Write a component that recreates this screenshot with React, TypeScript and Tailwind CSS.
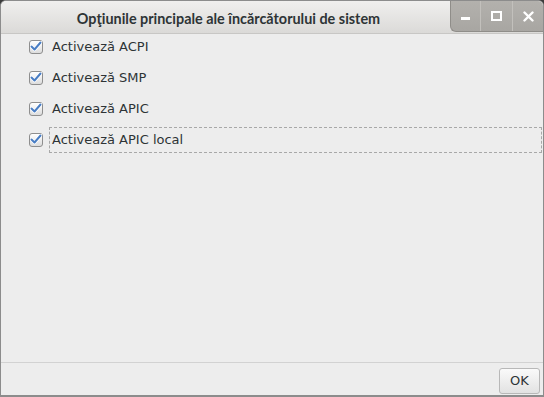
import React from 'react';

const options = ['Activează ACPI', 'Activează SMP', 'Activează APIC', 'Activează APIC local'];

const CheckBox = () => (
  <span className="w-[14px] h-[14px] rounded-[3px] border border-[#8e8e8e] bg-gradient-to-b from-[#ffffff] to-[#dcdcdc] flex items-center justify-center shrink-0">
    <svg width="12" height="11" viewBox="0 0 12 11">
      <path d="M1.5 5.5 L4.5 8.5 L10.5 1.5" fill="none" stroke="#ffffff" strokeWidth="3.6" strokeLinecap="round" strokeLinejoin="round" />
      <path d="M1.5 5.5 L4.5 8.5 L10.5 1.5" fill="none" stroke="#4a7ec4" strokeWidth="2" strokeLinecap="round" strokeLinejoin="round" />
    </svg>
  </span>
);

export default function App() {
  return (
    <div className="w-[544px] h-[397px] bg-[#3c3c3c] font-['DejaVu_Sans',sans-serif]">
      <div className="w-full h-full flex flex-col bg-[#ededed] rounded-t-[6px] border border-[#8c8c8c] border-b-2 overflow-hidden">
        {/* Title bar */}
        <div className="h-[33px] shrink-0 flex bg-gradient-to-b from-[#f0efee] to-[#dbdad8] border-b border-[#c8c7c5]">
          <div className="flex-1 flex items-center justify-center pt-[3px] pl-[6px] font-['Lato',sans-serif] text-[14.4px] font-bold text-[#2e3436]">
            Opţiunile principale ale încărcătorului de sistem
          </div>
          <div className="flex h-[31px] w-[93px] bg-gradient-to-b from-[#b3b1ad] to-[#a8a6a2] rounded-bl-[6px] border-l border-b border-[#8f8d89]">
            <div className="w-[30px] flex items-end justify-center pb-[11px] border-r border-[#c2c0bc]">
              <span className="w-[9px] h-[3px] bg-white" />
            </div>
            <div className="w-[32px] flex items-center justify-center border-r border-[#c2c0bc]">
              <span className="w-[11px] h-[10px] border-[2.5px] border-white" />
            </div>
            <div className="flex-1 flex items-center justify-center">
              <svg width="11" height="11" viewBox="0 0 11 11">
                <path d="M1.5 1.5 L9.5 9.5 M9.5 1.5 L1.5 9.5" stroke="#ffffff" strokeWidth="2.4" strokeLinecap="round" />
              </svg>
            </div>
          </div>
        </div>

        {/* Options */}
        <div className="flex-1 flex flex-col -mt-[3px] pl-[28px] pr-[1px]">
          {options.map((label, i) => (
            <div key={label} className="h-[31px] flex items-center gap-[6px]">
              <CheckBox />
              <span
                className={`h-[26px] flex items-center pl-[2px] text-[13px] text-[#2e3436] ${
                  i === options.length - 1 ? 'flex-1 border border-dashed border-[#a8a8a8]' : 'border border-transparent'
                }`}
              >
                {label}
              </span>
            </div>
          ))}
        </div>

        {/* Button bar */}
        <div className="h-[33px] shrink-0 border-t border-[#d2d2d2] flex justify-end items-start pr-[3px] pt-[5px]">
          <button className="w-[41px] h-[26px] rounded-[3px] border border-[#b8b8b8] bg-gradient-to-b from-[#fafafa] to-[#e2e2e2] text-[13px] text-[#2e3436]">
            OK
          </button>
        </div>
      </div>
    </div>
  );
}
